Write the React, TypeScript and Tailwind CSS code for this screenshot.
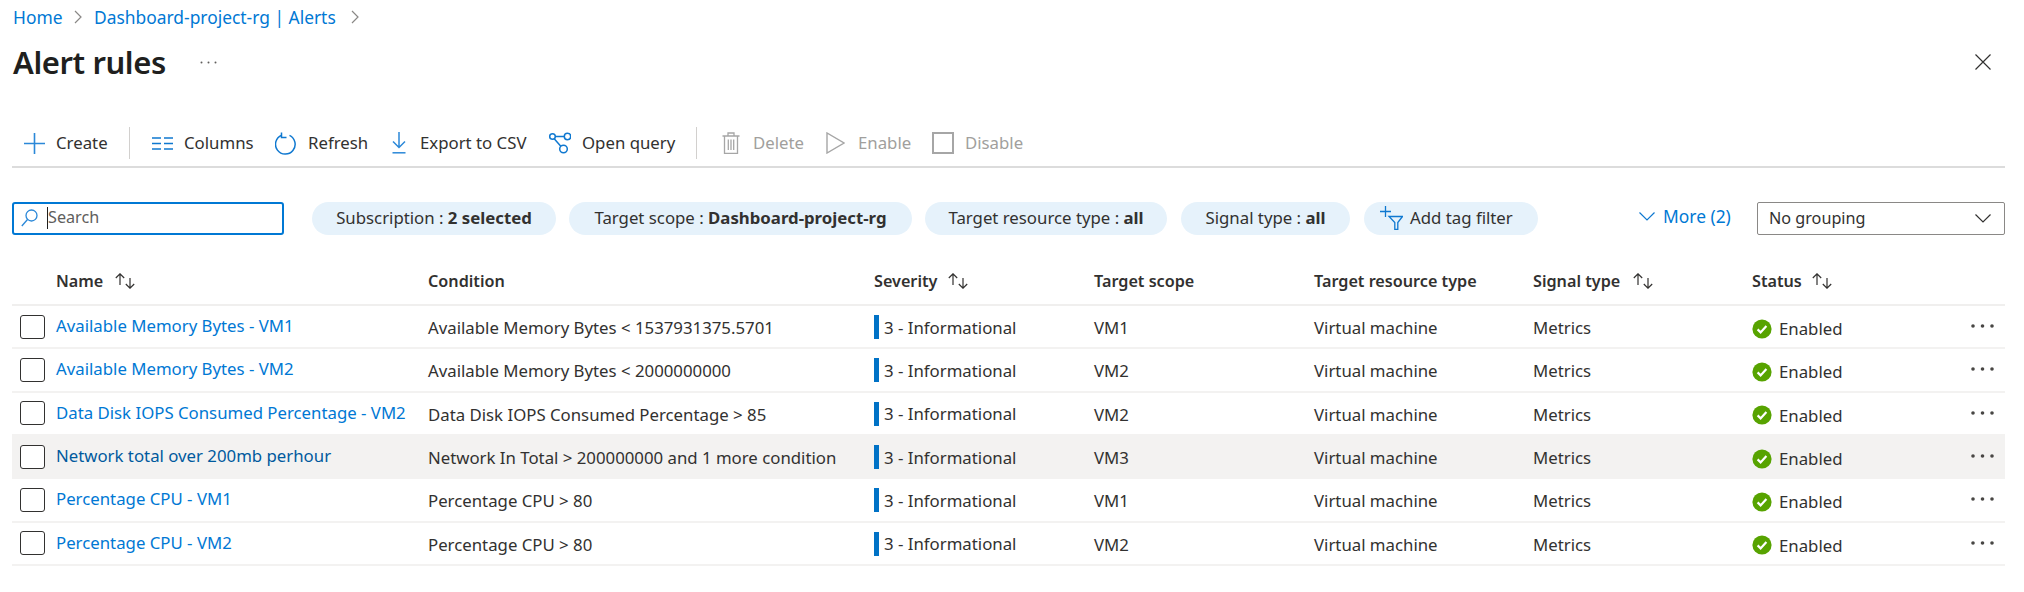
import React from "react";

const Plus = () => (
  <svg width="21" height="21" viewBox="0 0 21 21" fill="none" stroke="#2b88d8" strokeWidth="1.6"><path d="M10.5 0v21M0 10.5h21" /></svg>
);
const Columns = () => (
  <svg width="21" height="13" viewBox="0 0 21 13" fill="none" stroke="#0f78d0" strokeWidth="1.4"><path d="M0 1h9M12 1h9M0 6.5h9M12 6.5h9M0 12h9M12 12h9" /></svg>
);
const Refresh = () => (
  <svg width="22" height="23" viewBox="0 0 22 23" fill="none" stroke="#0f78d0" strokeWidth="1.5"><path d="M14.5 3.4A9.8 9.8 0 1 1 6.6 3.2" /><path d="M6.5 0.5v5h5" /></svg>
);
const Export = () => (
  <svg width="14" height="22" viewBox="0 0 14 22" fill="none" stroke="#2b88d8" strokeWidth="1.5"><path d="M7 0v15M1 9.5l6 6 6-6" /><path d="M0.5 20.8h13" /></svg>
);
const Query = () => (
  <svg width="22" height="22" viewBox="0 0 22 22" fill="none" stroke="#0f78d0" strokeWidth="1.5"><circle cx="3.5" cy="4.5" r="2.8" /><circle cx="18.5" cy="4.5" r="3.2" /><circle cx="14.5" cy="17" r="3.8" /><path d="M6.3 4.5h9M5.2 6.8l6.6 7.5" /></svg>
);
const Trash = () => (
  <svg width="18" height="22" viewBox="0 0 18 22" fill="none" stroke="#a6a6a6" strokeWidth="1.3"><path d="M0.5 4h17M6 4V1h6v3M2.5 4v17.3h13V4M6.3 7.5v10.5M9 7.5v10.5M11.7 7.5v10.5" /></svg>
);
const Play = () => (
  <svg width="19" height="22" viewBox="0 0 19 22" fill="none" stroke="#a6a6a6" strokeWidth="1.4"><path d="M1 1v20l17-10z" /></svg>
);
const Square = () => (
  <svg width="22" height="22" viewBox="0 0 22 22" fill="none" stroke="#a6a6a6" strokeWidth="2"><rect x="1" y="1" width="20" height="20" /></svg>
);
const Sort = () => (
  <svg width="22" height="16" viewBox="0 0 22 16" fill="none" stroke="#323130" strokeWidth="1.2"><path d="M6 12V0.8M1.8 5L6 0.8 10.2 5" /><path d="M16 5v10.2M11.8 11L16 15.2 20.2 11" /></svg>
);
const Chevron = () => (
  <svg width="16" height="9" viewBox="0 0 16 9" fill="none" stroke="#323130" strokeWidth="1.2"><path d="M0.5 0.5L8 8l7.5-7.5" /></svg>
);
const Crumb = () => (
  <svg width="8" height="14" viewBox="0 0 8 14" fill="none" stroke="#8a8886" strokeWidth="1.2"><path d="M1 1l6 6-6 6" /></svg>
);
const Check = () => (
  <svg width="20" height="20" viewBox="0 0 20 20"><circle cx="10" cy="10" r="9.6" fill="#57a300" /><path d="M5.6 10.4l3 3 5.8-6.4" fill="none" stroke="#fff" strokeWidth="2.2" /></svg>
);
const Dots = () => (
  <svg width="23" height="4" viewBox="0 0 23 4" fill="#484644"><circle cx="2" cy="2" r="1.8" /><circle cx="11.5" cy="2" r="1.8" /><circle cx="21" cy="2" r="1.8" /></svg>
);

const tools = [
  { label: "Columns", icon: <Columns />, item: "w-[123px] ml-[22px]", box: "w-[32px]" },
  { label: "Refresh", icon: <Refresh />, item: "w-[116px]", box: "w-[33px]" },
  { label: "Export to CSV", icon: <Export />, item: "w-[158px]", box: "w-[29px] pl-[1px]" },
  { label: "Open query", icon: <Query />, item: "w-[147px]", box: "w-[33px]" },
];
const off = [
  { label: "Delete", icon: <Trash />, item: "w-[105px] ml-[23px]", box: "w-[33px] pl-[2px]" },
  { label: "Enable", icon: <Play />, item: "w-[106px]", box: "w-[33px] pl-[1px]" },
  { label: "Disable", icon: <Square />, item: "w-[110px]", box: "w-[34px] pl-[1px]" },
];

const cols = "grid grid-cols-[44px_372px_446px_220px_220px_219px_219px_253px]";

const rows = [
  ["Available Memory Bytes - VM1", "Available Memory Bytes < 1537931375.5701", "VM1", false],
  ["Available Memory Bytes - VM2", "Available Memory Bytes < 2000000000", "VM2", false],
  ["Data Disk IOPS Consumed Percentage - VM2", "Data Disk IOPS Consumed Percentage > 85", "VM2", false],
  ["Network total over 200mb perhour", "Network In Total > 200000000 and 1 more condition", "VM3", true],
  ["Percentage CPU - VM1", "Percentage CPU > 80", "VM1", false],
  ["Percentage CPU - VM2", "Percentage CPU > 80", "VM2", false],
] as const;

export default function App() {
  return (
    <div className="w-[2024px] h-[592px] overflow-hidden bg-white text-[#323130] font-['Noto_Sans',sans-serif] text-[16.8px]">
      <div className="h-[34px] flex items-center pl-[13px] text-[#0078d4] text-[17.4px]">
        <span className="w-[61px]">Home</span>
        <Crumb />
        <span className="w-[257px] ml-[12px]">Dashboard-project-rg | Alerts</span>
        <Crumb />
      </div>

      <div className="h-[56px] flex items-center pl-[13px] pr-[33px]">
        <h1 className="text-[31px] font-semibold tracking-[-0.4px] text-[#201f1e] w-[187px]">Alert rules</h1>
        <svg width="17" height="3" viewBox="0 0 17 3" fill="#605e5c"><circle cx="1.5" cy="1.5" r="1" /><circle cx="8.5" cy="1.5" r="1" /><circle cx="15.5" cy="1.5" r="1" /></svg>
        <svg className="ml-auto" width="16" height="16" viewBox="0 0 16 16" fill="none" stroke="#323130" strokeWidth="1.2"><path d="M0.5 0.5l15 15M15.5 0.5l-15 15" /></svg>
      </div>

      <div className="mt-[32px] ml-[12px] w-[1993px] h-[46px] pb-[2px] border-b-2 border-[#dcdcdc] flex items-center pl-[12px]">
        <div className="flex items-center w-[105px]">
          <span className="w-[32px] flex"><Plus /></span>Create
        </div>
        <div className="w-px h-[32px] bg-[#d2d0ce]" />
        {tools.map((t) => (
          <div key={t.label} className={`flex items-center ${t.item}`}>
            <span className={`flex ${t.box}`}>{t.icon}</span>{t.label}
          </div>
        ))}
        <div className="w-px h-[32px] bg-[#d2d0ce]" />
        {off.map((t) => (
          <div key={t.label} className={`flex items-center text-[#a19f9d] ${t.item}`}>
            <span className={`flex ${t.box}`}>{t.icon}</span>{t.label}
          </div>
        ))}
      </div>

      <div className="mt-[33px] ml-[12px] w-[1993px] h-[34px] flex items-center">
        <div className="w-[272px] h-[33px] border-2 border-[#0078d4] rounded-[3px] flex items-center pl-[7px] text-[#605e5c] text-[16.2px]">
          <svg width="17" height="18" viewBox="0 0 17 18" fill="none" stroke="#2b88d8" strokeWidth="1.3"><circle cx="10.5" cy="6.5" r="5.5" /><path d="M6.5 10.5L0.8 17" /></svg>
          <span className="w-px h-[22px] bg-[#201f1e] ml-[9px]" />
          <span className="pb-[2px]">Search</span>
        </div>
        <div className="ml-[28px] w-[244px] h-[33px] rounded-full bg-[#e6f2fb] flex items-center justify-center">Subscription :&nbsp;<b className="font-bold">2 selected</b></div>
        <div className="ml-[13px] w-[343px] h-[33px] rounded-full bg-[#e6f2fb] flex items-center justify-center">Target scope :&nbsp;<b className="font-bold">Dashboard-project-rg</b></div>
        <div className="ml-[13px] w-[242px] h-[33px] rounded-full bg-[#e6f2fb] flex items-center justify-center">Target resource type :&nbsp;<b className="font-bold">all</b></div>
        <div className="ml-[14px] w-[169px] h-[33px] rounded-full bg-[#e6f2fb] flex items-center justify-center">Signal type :&nbsp;<b className="font-bold">all</b></div>
        <div className="ml-[14px] w-[174px] h-[33px] rounded-full bg-[#e6f2fb] flex items-center pl-[16px]">
          <svg className="mr-[7px]" width="23" height="24" viewBox="0 0 23 24" fill="none" stroke="#0f78d0" strokeWidth="1.3"><path d="M5.5 0v11M0 5.5h11" /><path d="M9 10.5h13.5L17.8 16.5V23.5h-3V16.5z" /></svg>
          Add tag filter
        </div>
        <div className="ml-[101px] w-[118px] flex items-center text-[#0078d4] text-[17.4px] pb-[3px]">
          <svg className="mr-[8px]" width="16" height="9" viewBox="0 0 16 9" fill="none" stroke="#0f78d0" strokeWidth="1.2"><path d="M0.5 0.5L8 8l7.5-7.5" /></svg>
          More (2)
        </div>
        <div className="w-[248px] h-[33px] border border-[#8a8886] rounded-[2px] flex items-center justify-between pl-[11px] pr-[13px] text-[16.2px]">
          No grouping
          <Chevron />
        </div>
      </div>

      <div className="ml-[12px] w-[1993px] mt-[23px]">
        <div className={`${cols} h-[48px] items-center font-semibold border-b-2 border-[#f0efee] text-[16.2px]`}>
          <span />
          <span className="flex items-center gap-[11px]">Name <Sort /></span>
          <span>Condition</span>
          <span className="flex items-center gap-[10px]">Severity <Sort /></span>
          <span>Target scope</span>
          <span>Target resource type</span>
          <span className="flex items-center gap-[12px]">Signal type <Sort /></span>
          <span className="flex items-center gap-[9px]">Status <Sort /></span>
        </div>
        {rows.map(([name, cond, vm, hover]) => (
          <div key={name} className={`${cols} h-[43.33px] items-center border-b-2 ${hover ? "bg-[#f3f2f1] border-[#f3f2f1]" : "border-[#f3f2f1]"}`}>
            <span className="pl-[8px] flex"><span className="w-[25px] h-[24px] border border-[#323130] rounded-[3px] bg-white" /></span>
            <span className={`pb-[2px] ${hover ? "text-[#005a9e]" : "text-[#0078d4]"}`}>{name}</span>
            <span className="pt-[2px]">{cond}</span>
            <span className="flex items-center gap-[5px] pt-[1px]"><span className="w-[5px] h-[24px] bg-[#0072c6]" />3 - Informational</span>
            <span className="pt-[2px]">{vm}</span>
            <span className="pt-[2px]">Virtual machine</span>
            <span className="pt-[2px]">Metrics</span>
            <span className="flex items-center pr-[11px]">
              <span className="flex items-center gap-[7px] pt-[4px]"><Check />Enabled</span>
              <span className="ml-auto flex pb-[1px]"><Dots /></span>
            </span>
          </div>
        ))}
      </div>
    </div>
  );
}
